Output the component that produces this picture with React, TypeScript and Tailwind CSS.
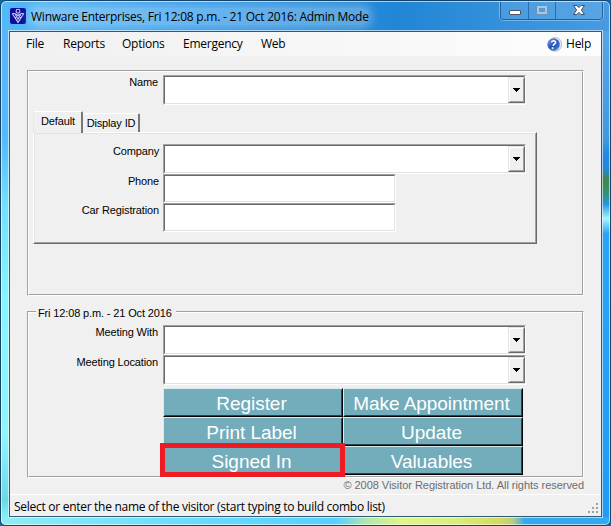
import React from 'react'

const menuItems = [
  { label: 'File', className: 'w-[37px]' },
  { label: 'Reports', className: 'w-[59px]' },
  { label: 'Options', className: 'w-[61px]' },
  { label: 'Emergency', className: 'w-[78px]' },
  { label: 'Web', className: 'w-[40px]' },
]

const actions = [
  'Register',
  'Make Appointment',
  'Print Label',
  'Update',
  'Signed In',
  'Valuables',
]

function ComboBox() {
  return (
    <div className="h-[30px] w-[363px] shrink-0 border border-t-[#a0a0a0] border-l-[#a0a0a0] border-r-white border-b-white">
      <div className="flex h-full justify-end border border-t-[#696969] border-l-[#696969] border-r-[#e3e3e3] border-b-[#e3e3e3] bg-white">
        <button
          aria-label="Open list"
          className="-mr-px h-[26px] w-[17px] border border-t-[#e3e3e3] border-l-[#e3e3e3] border-r-[#696969] border-b-[#696969] bg-[#f0f0f0]"
        >
          <span className="flex h-full w-full items-center justify-center border border-t-white border-l-white border-r-[#a0a0a0] border-b-[#a0a0a0]">
            <svg width="7" height="4" viewBox="0 0 7 4" shapeRendering="crispEdges">
              <path d="M0 0h7v1H0zM1 1h5v1H1zM2 2h3v1H2zM3 3h1v1H3z" />
            </svg>
          </span>
        </button>
      </div>
    </div>
  )
}

function TextBox() {
  return (
    <div className="h-[29px] w-[233px] shrink-0 border border-t-[#a0a0a0] border-l-[#a0a0a0] border-r-white border-b-white">
      <div className="h-full border border-t-[#696969] border-l-[#696969] border-r-[#e3e3e3] border-b-[#e3e3e3] bg-white" />
    </div>
  )
}

interface FieldProps {
  label: string
  labelClass: string
  children: React.ReactNode
}

function Field({ label, labelClass, children }: FieldProps) {
  return (
    <div className="flex items-start">
      <label className={`shrink-0 pt-px text-right leading-[13px] ${labelClass}`}>
        {label}
      </label>
      {children}
    </div>
  )
}

function TitleBar() {
  return (
    <div className="flex h-[29px] items-start justify-between pl-[9px] pr-[7px]">
      <div className="flex pt-[7px]">
        <svg width="16" height="16" viewBox="0 0 16 16" fill="none">
          <rect width="16" height="16" rx="2" fill="#0d0f9b" />
          <g stroke="#c3c6f5" strokeWidth="1.1">
            <circle cx="8" cy="3.2" r="1.9" />
            <path d="M2.2 5.5L8 14.4L13.8 5.5M2.2 5.5H4.8L8 11.2L11.2 5.5H13.8M4.8 5.8L8 7.2L11.2 5.8M5 9.8L8 7.2L11 9.8" />
          </g>
        </svg>
        <div className="ml-[5px] h-[17px] rounded-full bg-white/25 whitespace-nowrap font-['Open_Sans',sans-serif] text-[12px] leading-[17px] tracking-[-0.24px] text-black shadow-[0_0_8px_4px_rgba(255,255,255,0.25)]">
          Winware Enterprises, Fri 12:08 p.m. - 21 Oct 2016: Admin Mode
        </div>
      </div>
      <div className="flex h-[19px] rounded-b-[4px] border border-t-0 border-[#26619c] shadow-[0_0_0_1px_rgba(160,210,250,0.55)]">
        <button
          aria-label="Minimize"
          className="flex w-[28px] items-start justify-center border-r border-[#2b6dac] bg-white/10 pt-[9px]"
        >
          <span className="h-[5px] w-[12px] rounded-[1px] border border-[#4c5365] bg-white" />
        </button>
        <button
          aria-label="Maximize"
          className="flex w-[27px] items-start justify-center border-r border-[#2b6dac] bg-white/10 pt-[4px]"
        >
          <span className="h-[10px] w-[12px] border border-[#7291b5] bg-[#9dcaf0] p-[2px]">
            <span className="block h-full w-full border border-[#7093b8] bg-[#559ddd]" />
          </span>
        </button>
        <button
          aria-label="Close"
          className="flex w-[46px] items-start justify-center bg-white/10 pt-[4px]"
        >
          <svg width="12" height="10" viewBox="0 0 12 10">
            <path
              d="M.6 .5H3.9L6 2.6L8.1 .5H11.4L8.4 5L11.4 9.5H8.1L6 7.4L3.9 9.5H.6L3.6 5Z"
              fill="#fff"
              stroke="#474d61"
            />
          </svg>
        </button>
      </div>
    </div>
  )
}

function MenuBar() {
  return (
    <div className="flex h-[24px] shrink-0 items-start bg-linear-to-r from-[#f0f0f0] to-[#fdfdfd] pl-4 pr-[10px] pt-[4px] font-['Open_Sans',sans-serif] text-[12px] leading-4 tracking-[-0.25px]">
      <div className="flex flex-1">
        {menuItems.map((item) => (
          <span key={item.label} className={`shrink-0 ${item.className}`}>
            {item.label}
          </span>
        ))}
      </div>
      <svg width="15" height="15" viewBox="0 0 15 15" className="mt-px mr-[4px]">
        <defs>
          <linearGradient id="orb" x1="0" y1="0" x2="1" y2="1">
            <stop offset="0" stopColor="#86abe2" />
            <stop offset="0.5" stopColor="#2549b4" />
            <stop offset="1" stopColor="#3a94e8" />
          </linearGradient>
        </defs>
        <circle cx="8" cy="7.4" r="6.8" fill="#e3eaf2" stroke="#a3b0c2" strokeWidth=".8" />
        <circle cx="6.6" cy="7.6" r="6" fill="url(#orb)" stroke="#6a87ba" strokeWidth=".6" />
        <path d="M4.4 5.4C4.8 3.6 8.6 3.2 8.7 5.2C8.8 6.8 6.4 7 6.1 8.9" fill="none" stroke="#fff" strokeWidth="1.6" />
        <circle cx="5.6" cy="11.2" r="1.1" fill="#b9f2ff" />
      </svg>
      <span>Help</span>
    </div>
  )
}

function VisitorGroup() {
  return (
    <div className="ml-[17px] mt-[14px] h-[226px] w-[557px] shrink-0 border border-t-[#a0a0a0] border-l-[#a0a0a0] border-r-white border-b-white">
      <div className="h-full border border-t-white border-l-white border-r-[#a0a0a0] border-b-[#a0a0a0] pl-[4px] pt-[3px]">
        <Field label="Name" labelClass="w-[125px] mr-[5px]">
          <ComboBox />
        </Field>
        <div className="mt-[6px] flex h-[21px] items-end">
          <div className="z-10 -mb-px flex h-[22px] w-[50px] justify-center rounded-t-[2px] border-t border-l border-r-2 border-t-white border-l-[#e8e8e8] border-r-[#777777] bg-[#f0f0f0] pl-px pt-[3px] leading-[13px]">
            Default
          </div>
          <div className="flex h-[19px] w-[57px] justify-center rounded-t-[2px] border-t border-r-2 border-t-white border-r-[#777777] pl-px pt-[3px] leading-[13px]">
            Display ID
          </div>
        </div>
        <div className="h-[112px] w-[504px] border border-t-white border-l-white border-r-[#696969] border-b-[#696969]">
          <div className="h-full border border-t-[#e3e3e3] border-l-[#e3e3e3] border-r-[#a0a0a0] border-b-[#a0a0a0] pt-[10px]">
            <Field label="Company" labelClass="w-[124px] mr-[4px]">
              <ComboBox />
            </Field>
            <Field label="Phone" labelClass="w-[124px] mr-[4px]">
              <TextBox />
            </Field>
            <Field label="Car Registration" labelClass="w-[124px] mr-[4px]">
              <TextBox />
            </Field>
          </div>
        </div>
      </div>
    </div>
  )
}

function MeetingGroup() {
  return (
    <div className="relative ml-[17px] mt-[15px] h-[167px] w-[557px] shrink-0 border border-t-[#a0a0a0] border-l-[#a0a0a0] border-r-white border-b-white">
      <span className="absolute -top-[5px] left-[8px] whitespace-nowrap bg-[#f0f0f0] pl-[2px] pr-[4px] leading-[13px]">
        Fri 12:08 p.m. - 21 Oct 2016
      </span>
      <div className="h-full border border-t-white border-l-white border-r-[#a0a0a0] border-b-[#a0a0a0] pl-[4px] pt-[12px]">
        <Field label="Meeting With" labelClass="w-[125px] mr-[5px]">
          <ComboBox />
        </Field>
        <Field label="Meeting Location" labelClass="w-[125px] mr-[5px]">
          <ComboBox />
        </Field>
        <div className="relative ml-[130px] mt-[3px] grid w-[360px] grid-cols-2">
          {actions.map((action) => (
            <button
              key={action}
              className="h-[29px] border border-t-[#dceaec] border-l-[#dceaec] border-r-black border-b-black bg-[#73acba]"
            >
              <span className="flex h-full w-full items-center justify-center border border-t-[#73acba] border-l-[#73acba] border-r-[#264850] border-b-[#264850] pr-[3px] pt-[2px] text-[19px] leading-none tracking-[-0.05px] text-white">
                {action}
              </span>
            </button>
          ))}
          <div className="pointer-events-none absolute -left-[3px] top-[55px] h-[34px] w-[185px] border-[5px] border-[#ed1c24]" />
        </div>
      </div>
    </div>
  )
}

function ResizeGrip() {
  return (
    <svg width="11" height="11" viewBox="0 0 11 11" fill="#a0a0a0" className="mt-[5px]" shapeRendering="crispEdges">
      <path d="M8 0h2v2H8zM4 4h2v2H4zM8 4h2v2H8zM0 8h2v2H0zM4 8h2v2H4zM8 8h2v2H8z" />
    </svg>
  )
}

export default function App() {
  return (
    <div className="h-[526px] w-[611px] overflow-hidden bg-[#17679d] font-['Liberation_Sans',Arial,sans-serif] text-[11px] tracking-[-0.14px] text-black">
      <div className="relative flex h-full w-full flex-col overflow-hidden rounded-[6px] border border-[#164268] bg-[linear-gradient(90deg,#55b8f6_0%,#389deb_30%,#2186d5_65%,#489be1_100%)]">
        {/* Glass edges of the window frame */}
        <div className="absolute left-0 top-[30px] h-[494px] w-[9px] bg-[linear-gradient(#59b5f7_0%,#55baff_22%,#73dfff_35%,#86f5ff_54%,#8ff5ff_82%,#6bd9e5_95%,#91faff_100%)]" />
        <div className="absolute right-0 top-[30px] h-[494px] w-[8px] bg-[linear-gradient(#55a6e8_0%,#4298df_22%,#2189e1_25%,#2388d6_28%,#42854c_30%,#359278_33%,#2595df_35%,#a4f5ff_38%,#2ba3f5_41%,#229bf5_100%)]" />
        <div className="absolute bottom-0 left-0 h-[8px] w-full bg-[linear-gradient(90deg,#8eecf3_0%,#66dafd_35%,#58cfff_55%,#b0e8ac_60%,#dff786_66%,#d6ef7b_75%,#d5d85f_82%,#b7cf82_84%,#35a9ed_86%,#35a9ed_100%)]" />
        <div className="pointer-events-none absolute inset-0 rounded-[5px] border border-white/60" />
        <TitleBar />
        <div className="relative ml-[7px] h-[488px] w-[595px] border border-white/60">
          <div className="flex h-[486px] w-full flex-col border border-[#315b74] bg-[#f0f0f0]">
            <MenuBar />
            <VisitorGroup />
            <MeetingGroup />
            <div className="flex h-[16px] shrink-0 justify-end pr-[17px] leading-[15px] tracking-[-0.04px] text-[#6d6d6d]">
              © 2008 Visitor Registration Ltd. All rights reserved
            </div>
            <div className="flex flex-1 justify-between border-t border-white pl-[4px] pr-[2px] pt-[3px] font-['Open_Sans',sans-serif] text-[12px] leading-[17px] tracking-[-0.28px]">
              <span>
                Select or enter the name of the visitor (start typing to build combo list)
              </span>
              <ResizeGrip />
            </div>
          </div>
        </div>
      </div>
    </div>
  )
}
